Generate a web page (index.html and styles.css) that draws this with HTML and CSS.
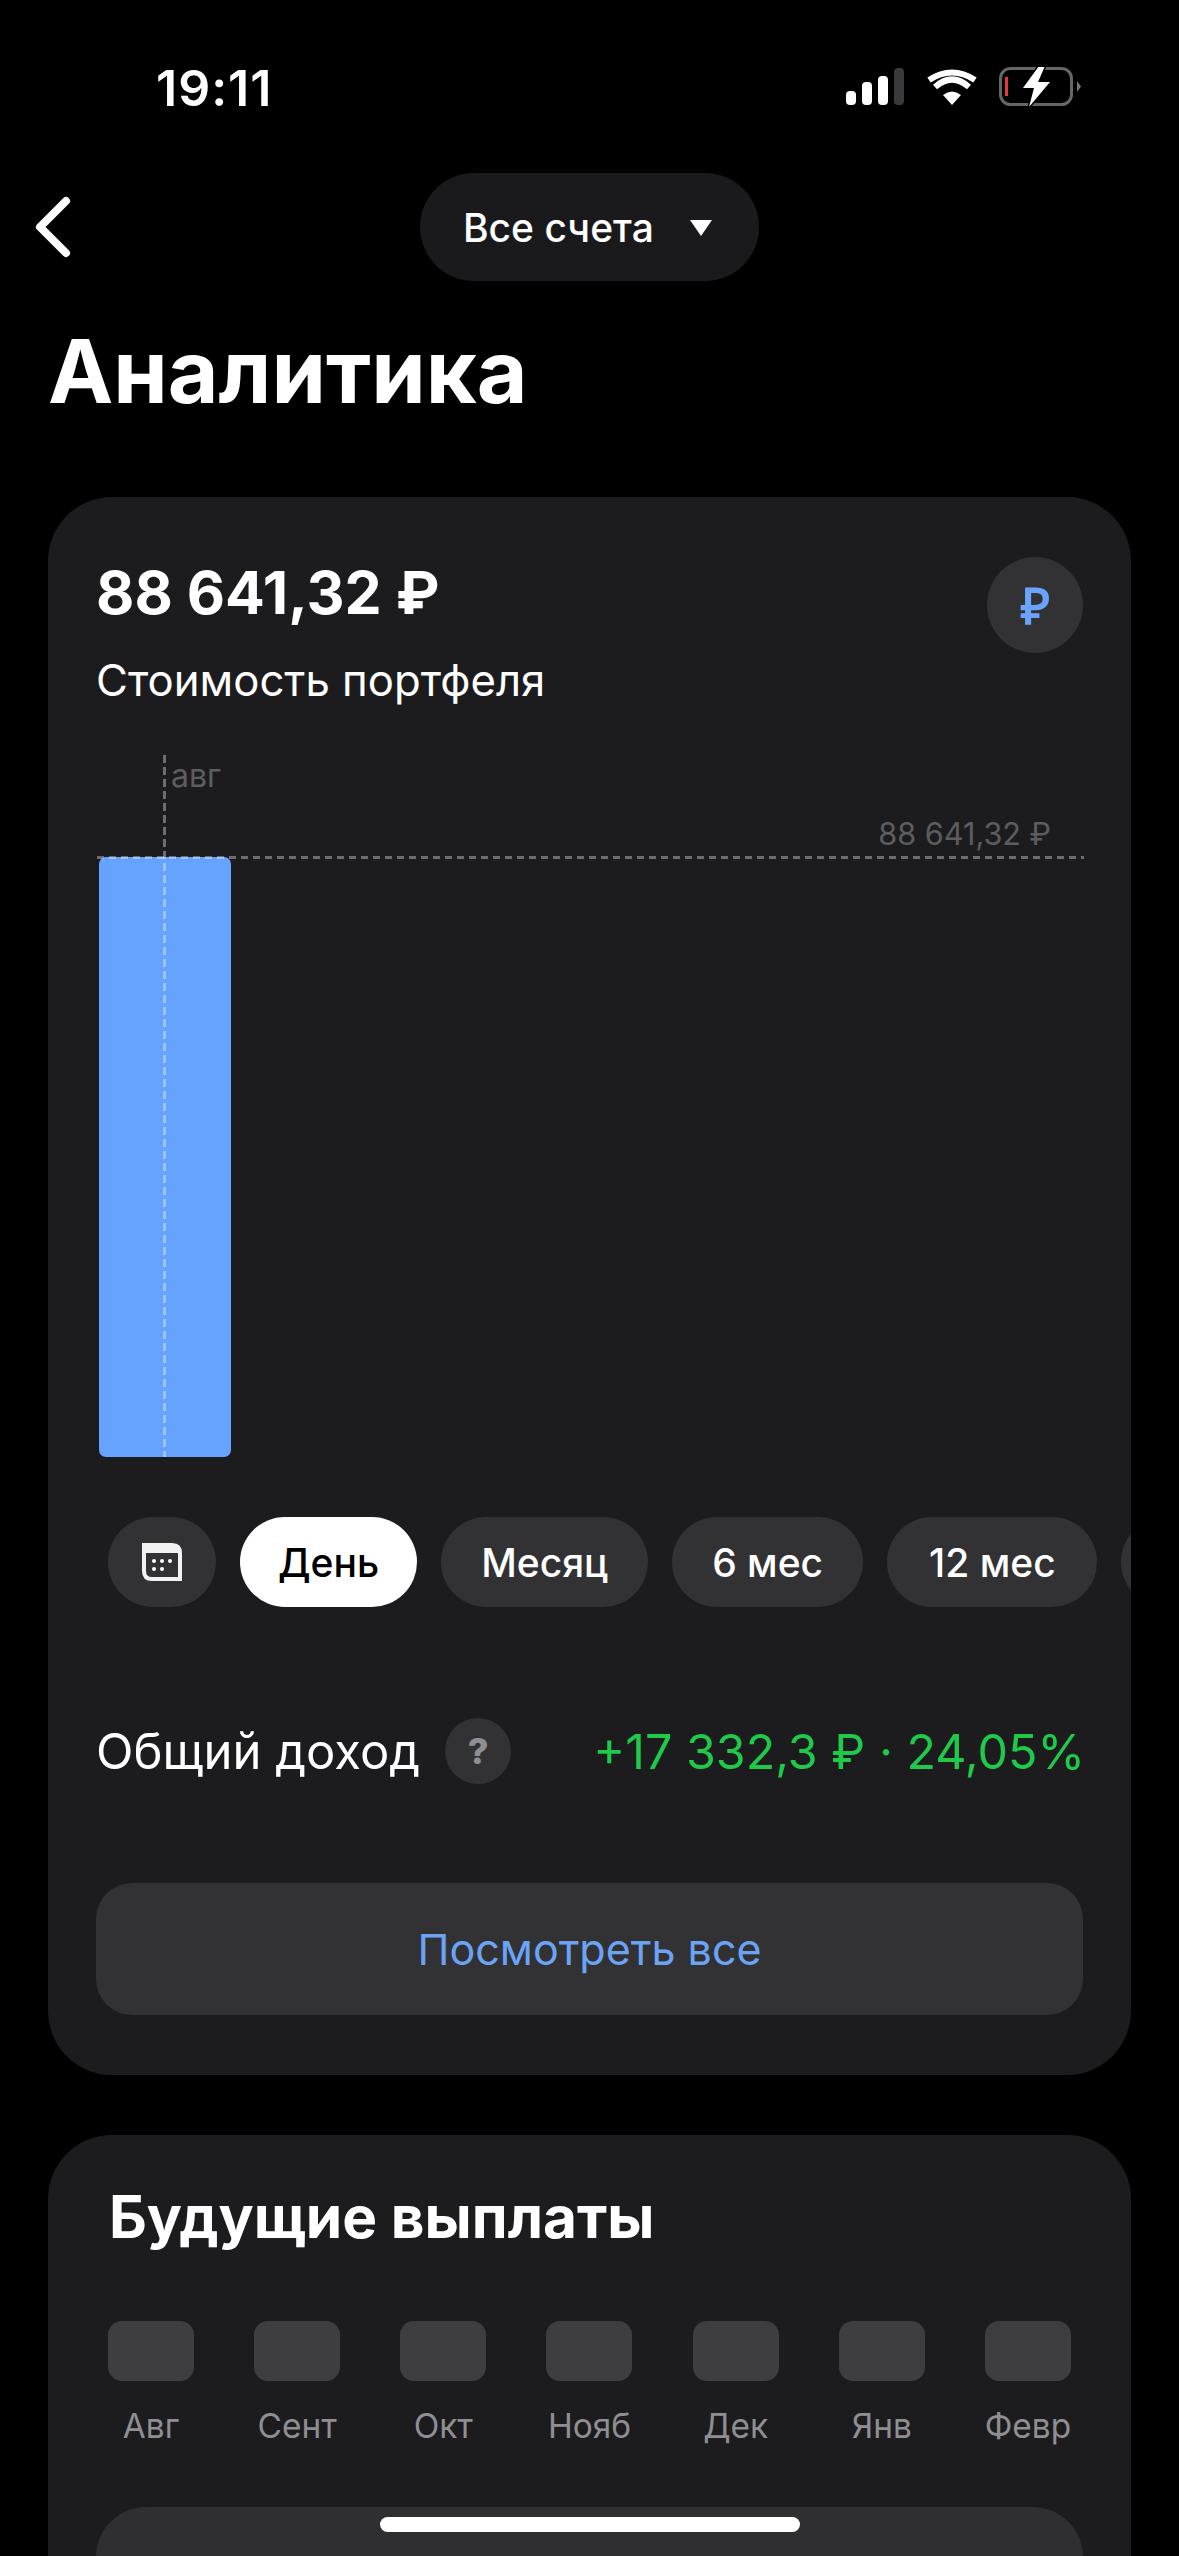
FILE: index.html
```html
<!DOCTYPE html>
<html lang="ru">
<head>
    <meta charset="UTF-8">
    <meta name="viewport" content="width=device-width, initial-scale=1.0">
    <title>Аналитика</title>
    <link rel="stylesheet" href="styles.css">
</head>
<body>
    <div class="status-bar">
        <div class="time">19:11</div>
        <div class="status-icons">
            <svg width="58" height="37" viewBox="0 0 58 37">
                <rect x="0" y="23" width="10" height="14" rx="4" fill="#fff"/>
                <rect x="16" y="14" width="10" height="23" rx="4" fill="#fff"/>
                <rect x="32" y="8" width="10" height="29" rx="4" fill="#fff"/>
                <rect x="48" y="0" width="10" height="37" rx="4" fill="#3a3a3c"/>
            </svg>
            <svg class="wifi" width="50" height="37" viewBox="0 0 50 37">
                <path d="M25 37 L16 27 Q25 20 34 27 Z" fill="#fff"/>
                <path d="M8 19 Q25 4 42 19" fill="none" stroke="#fff" stroke-width="6"/>
                <path d="M2 9 Q25 -6 48 9" fill="none" stroke="#fff" stroke-width="6" transform="translate(0 3)"/>
            </svg>
            <svg class="battery" width="82" height="39" viewBox="0 0 82 39">
                <rect x="1.5" y="1.5" width="71" height="36" rx="10" fill="none" stroke="#666" stroke-width="3"/>
                <rect x="6" y="10" width="3" height="19" fill="#e5393a"/>
                <path d="M78 14 L82 19.5 L78 25 Z" fill="#777"/>
                <path d="M40 -1 L24 21 L35 21 L30 40 L51 15 L39 15 L46 -1 Z" fill="#fff" stroke="#000" stroke-width="3" paint-order="stroke"/>
            </svg>
        </div>
    </div>

    <div class="nav">
        <svg class="back" width="38" height="64" viewBox="0 0 38 64">
            <path d="M32 6 L6 32 L32 58" fill="none" stroke="#fff" stroke-width="8" stroke-linecap="round" stroke-linejoin="round"/>
        </svg>
        <div class="account-pill">
            <span>Все счета</span>
            <span class="triangle"></span>
        </div>
    </div>

    <h1 class="page-title">Аналитика</h1>

    <div class="card">
        <div class="portfolio-head">
            <div>
                <div class="portfolio-value">88 641,32 ₽</div>
                <div class="portfolio-label">Стоимость портфеля</div>
            </div>
            <div class="currency-badge">₽</div>
        </div>

        <div class="chart">
            <div class="month-line"></div>
            <div class="month-label">авг</div>
            <div class="value-label">88 641,32 ₽</div>
            <div class="value-line"></div>
            <div class="bar"></div>
        </div>

        <div class="periods">
            <div class="period period-icon">
                <svg width="40" height="38" viewBox="0 0 40 38">
                    <path d="M0 0 H30 Q40 0 40 10 V38 H10 Q0 38 0 28 Z M4 10 V28 Q4 34 10 34 H36 V10 Z" fill="#f2f2f2" fill-rule="evenodd"/>
                    <circle cx="12" cy="18" r="2" fill="#fff"/>
                    <circle cx="20" cy="18" r="2" fill="#fff"/>
                    <circle cx="28" cy="18" r="2" fill="#fff"/>
                    <circle cx="12" cy="26" r="2" fill="#fff"/>
                    <circle cx="20" cy="26" r="2" fill="#fff"/>
                </svg>
            </div>
            <div class="period active">День</div>
            <div class="period">Месяц</div>
            <div class="period">6 мес</div>
            <div class="period period-wide">12 мес</div>
            <div class="period period-more"></div>
        </div>

        <div class="income-row">
            <div class="income-label">
                <span>Общий доход</span>
                <span class="help">?</span>
            </div>
            <div class="income-value">+17 332,3 ₽ · 24,05%</div>
        </div>

        <div class="view-all">Посмотреть все</div>
    </div>

    <div class="card payouts">
        <h2>Будущие выплаты</h2>
        <div class="months">
            <div class="month"><div class="month-box"></div><span>Авг</span></div>
            <div class="month"><div class="month-box"></div><span>Сент</span></div>
            <div class="month"><div class="month-box"></div><span>Окт</span></div>
            <div class="month"><div class="month-box"></div><span>Нояб</span></div>
            <div class="month"><div class="month-box"></div><span>Дек</span></div>
            <div class="month"><div class="month-box"></div><span>Янв</span></div>
            <div class="month"><div class="month-box"></div><span>Февр</span></div>
        </div>
        <div class="payout-panel"></div>
    </div>

    <div class="home-indicator"></div>
</body>
</html>
```

FILE: styles.css
```css
html, body {
    margin: 0;
    padding: 0;
    height: 2556px;
    overflow: hidden;
}
body {
    background: #000;
    color: #fff;
    font-family: Inter, "Noto Sans", sans-serif;
    position: relative;
}
.status-bar {
    height: 173px;
    box-sizing: border-box;
    padding: 60px 98px 0 156px;
    display: flex;
    justify-content: space-between;
    align-items: flex-start;
}
.time {
    font-size: 50px;
    font-weight: 600;
    line-height: 56px;
    letter-spacing: 1px;
}
.status-icons {
    display: flex;
    align-items: flex-start;
    margin-top: 8px;
}
.wifi {
    margin-left: 23px;
}
.battery {
    margin-left: 22px;
    margin-top: -1px;
}
.nav {
    height: 108px;
    display: flex;
    align-items: center;
    justify-content: center;
    position: relative;
}
.back {
    position: absolute;
    left: 34px;
    top: 22px;
}
.account-pill {
    width: 339px;
    height: 108px;
    box-sizing: border-box;
    background: #1a1a1c;
    border-radius: 54px;
    padding: 0 47px 0 43px;
    display: flex;
    align-items: center;
    justify-content: space-between;
    font-size: 39px;
    font-weight: 500;
}
.triangle {
    width: 0;
    height: 0;
    margin-top: 2px;
    border-left: 11px solid transparent;
    border-right: 11px solid transparent;
    border-top: 16px solid #fff;
}
.page-title {
    margin: 0;
    padding: 40px 0 0 48px;
    font-size: 87.5px;
    font-weight: 700;
    line-height: 100px;
    height: 168px;
    box-sizing: border-box;
}
.card {
    margin: 48px 48px 0;
    height: 1578px;
    box-sizing: border-box;
    background: #1c1c1e;
    border-radius: 64px;
    padding: 60px 48px 0;
    overflow: hidden;
}
.portfolio-head {
    display: flex;
    justify-content: space-between;
    align-items: flex-start;
}
.portfolio-value {
    font-size: 59px;
    font-weight: 700;
    line-height: 72px;
}
.portfolio-label {
    font-size: 43.7px;
    line-height: 52px;
    margin-top: 26px;
    margin-bottom: -2px;
}
.currency-badge {
    width: 96px;
    height: 96px;
    border-radius: 50%;
    background: #323234;
    color: #6aa4ff;
    font-family: "Liberation Sans", sans-serif;
    font-size: 50px;
    font-weight: 700;
    display: flex;
    align-items: center;
    justify-content: center;
}
.chart {
    height: 702px;
    margin-top: 50px;
    position: relative;
    display: flex;
    align-items: flex-end;
}
.bar {
    width: 132px;
    height: 600px;
    margin-left: 3px;
    background: #66a3ff;
    border-radius: 7px;
}
.month-line {
    position: absolute;
    left: 67px;
    top: 0;
    bottom: 0;
    width: 3px;
    background: repeating-linear-gradient(to bottom, rgba(255, 255, 255, 0.36) 0 8px, transparent 8px 12px);
    z-index: 1;
}
.month-label {
    position: absolute;
    left: 75px;
    top: 0;
    font-size: 32px;
    line-height: 42px;
    color: #5d5d5f;
}
.value-label {
    position: absolute;
    right: 32px;
    top: 58px;
    font-size: 30.6px;
    line-height: 42px;
    color: #5d5d5f;
}
.value-line {
    position: absolute;
    left: 1px;
    right: -1px;
    top: 101px;
    height: 3px;
    background: repeating-linear-gradient(to right, rgba(255, 255, 255, 0.36) 0 7px, transparent 7px 12px);
    z-index: 1;
}
.periods {
    display: flex;
    gap: 24px;
    margin: 60px -48px 0 12px;
}
.period {
    height: 90px;
    flex: none;
    padding: 0 40px;
    border-radius: 45px;
    background: #323234;
    font-size: 39px;
    font-weight: 500;
    display: flex;
    align-items: center;
}
.period-icon {
    width: 108px;
    padding: 0;
    justify-content: center;
}
.period-wide {
    padding: 0 41px 0 42px;
}
.period-more {
    width: 100px;
    padding: 0;
}
.active {
    background: #fff;
    color: #000;
    padding: 0 38px;
}
.income-row {
    display: flex;
    justify-content: space-between;
    align-items: center;
    margin-top: 111px;
    height: 66px;
}
.income-label {
    display: flex;
    align-items: center;
    gap: 25px;
    font-size: 49px;
}
.help {
    width: 66px;
    height: 66px;
    border-radius: 50%;
    background: #323234;
    color: #8e8e93;
    font-size: 36px;
    font-weight: 800;
    display: flex;
    align-items: center;
    justify-content: center;
}
.income-value {
    font-size: 48.4px;
    color: #1fc94a;
    margin-right: -2px;
}
.view-all {
    height: 132px;
    margin-top: 99px;
    border-radius: 36px;
    background: #323234;
    color: #6ba3f5;
    font-size: 43px;
    display: flex;
    align-items: center;
    justify-content: center;
}
.payouts {
    margin-top: 60px;
    height: 500px;
    padding: 48px 48px 0;
}
.payouts h2 {
    margin: 0 0 0 13px;
    font-size: 58.5px;
    font-weight: 700;
    line-height: 68px;
}
.months {
    display: flex;
    justify-content: space-between;
    margin: 70px 12px 0;
}
.month {
    width: 86px;
    display: flex;
    flex-direction: column;
    align-items: center;
}
.month-box {
    width: 86px;
    height: 60px;
    border-radius: 14px;
    background: #3e3e40;
}
.month span {
    margin-top: 25px;
    font-size: 33.4px;
    line-height: 40px;
    color: #8e8e93;
    white-space: nowrap;
}
.payout-panel {
    height: 200px;
    margin-top: 61px;
    background: #2f2f31;
    border-radius: 50px 50px 0 0;
}
.home-indicator {
    position: absolute;
    left: 380px;
    top: 2517px;
    width: 420px;
    height: 15px;
    border-radius: 8px;
    background: #fff;
}
```
